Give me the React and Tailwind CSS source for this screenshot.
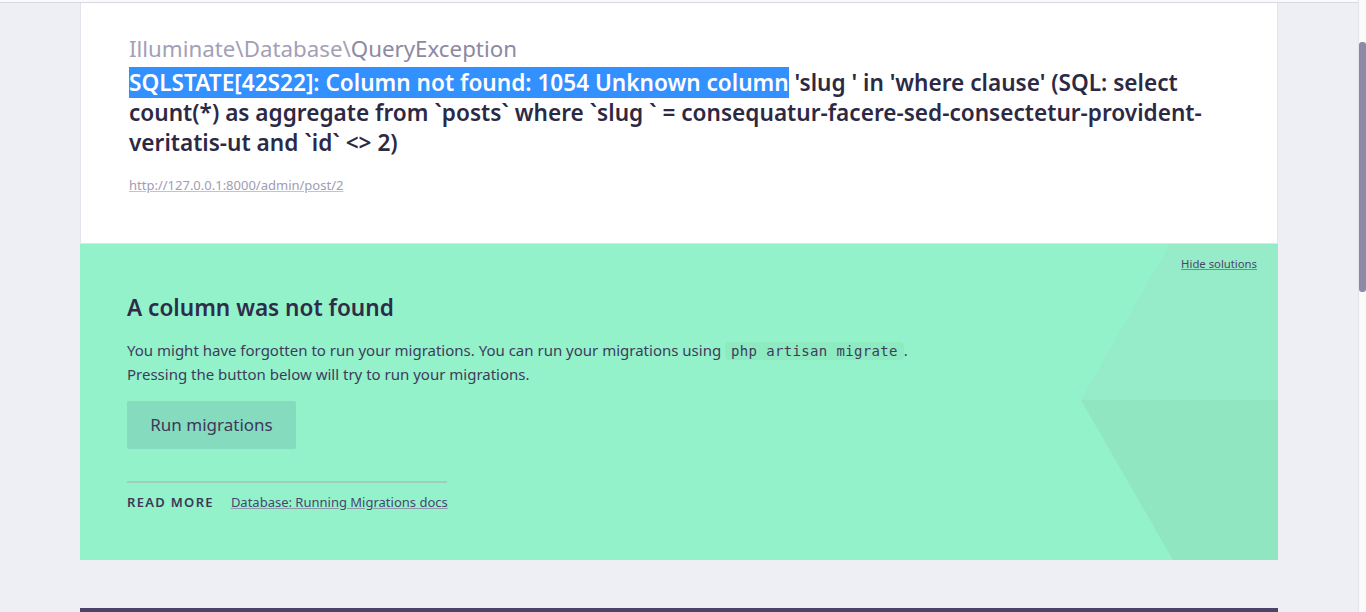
import React from "react";

export default function App() {
  const sans = { fontFamily: '"Noto Sans", "Open Sans", sans-serif' };
  return (
    <div className="flex h-[612px] w-full overflow-hidden bg-[#eeeef5]" style={sans}>
      <div className="flex min-w-0 flex-1 flex-col">
        <div className="h-[2px] w-full shrink-0 bg-[#fafafc]" />
        <div className="h-px w-full shrink-0 bg-[#d8d8e0]" />
        <div className="mx-auto flex w-[1198px] flex-col">
          <div className="border-x border-[#e4e4ec] bg-white pb-[49px] pl-[48px] pr-[48px] pt-[30px]">
            <div className="text-[22.3px] leading-[32px] text-[#a3a0b6]">
              Illuminate\Database\<span className="text-[#8d89a2]">QueryException</span>
            </div>
            <div className="mt-[3px] text-[22.6px] font-semibold leading-[30px] text-[#2c2945]">
              <span className="bg-[#3390ff] text-white">SQLSTATE[42S22]: Column not found: 1054 Unknown column</span>{" "}
              'slug ' in 'where clause' (SQL: select count(*) as aggregate from `posts` where `slug ` = consequatur-facere-sed-consectetur-provident-veritatis-ut and `id` &lt;&gt; 2)
            </div>
            <div className="mt-[18px] text-[13px] leading-[18px]">
              <a className="text-[#a09cb4] underline decoration-[#c4c1d2]">http://127.0.0.1:8000/admin/post/2</a>
            </div>
          </div>
          <div className="relative h-[317px] overflow-hidden border-t border-[#e2e2ea] bg-[#93f2ca]">
            <svg className="absolute inset-0 h-full w-full" viewBox="0 0 1198 316" preserveAspectRatio="none">
              <polygon points="1090,0 1198,0 1198,156 1001,156" fill="#96ebc8" />
              <polygon points="1001,156 1198,156 1198,316 1093,316" fill="#8fe6c1" />
            </svg>
            <a className="absolute right-[21px] top-[12px] text-[11.3px] leading-[16px] text-[#4b4668] underline decoration-[#7a86a0]">
              Hide solutions
            </a>
            <div className="relative pl-[47px] pt-[50px]">
              <h2 className="text-[22.6px] font-semibold leading-[28px] text-[#2f2c4a]">A column was not found</h2>
              <p className="mt-[16px] text-[15px] leading-[24px] text-[#3f3b5c]">
                You might have forgotten to run your migrations. You can run your migrations using{" "}
                <code
                  className="rounded-sm bg-[#8deac1] px-[6px] py-[1px] text-[14px] leading-[18px] tracking-[0.35px] text-[#3f3b5c]"
                  style={{ fontFamily: '"DejaVu Sans Mono", monospace' }}
                >
                  php artisan migrate
                </code>
                .<br />
                Pressing the button below will try to run your migrations.
              </p>
              <button className="mt-[15px] h-[48px] w-[169px] rounded-[2px] bg-[#85dbbd] text-[17px] text-[#3c3858]">
                Run migrations
              </button>
              <div className="mt-[32px] h-[2px] w-[320px] bg-[#9fcfbb]" />
              <div className="mt-[10px] flex items-center text-[13px] leading-[18px] text-[#3c3858]">
                <span className="font-semibold tracking-[0.1em]">READ MORE</span>
                <a className="ml-[17px] text-[#4a4570] underline decoration-[#8c9aaa]">Database: Running Migrations docs</a>
              </div>
            </div>
          </div>
          <div className="mt-[48px] h-[10px] bg-[#4a4568]" />
        </div>
      </div>
      <div className="h-full w-[8px] border-l border-[#e3e3e8] bg-[#fafafa]">
        <div className="mt-[42px] h-[250px] w-full rounded-[3px] bg-[#8e8aa5]" />
      </div>
    </div>
  );
}
